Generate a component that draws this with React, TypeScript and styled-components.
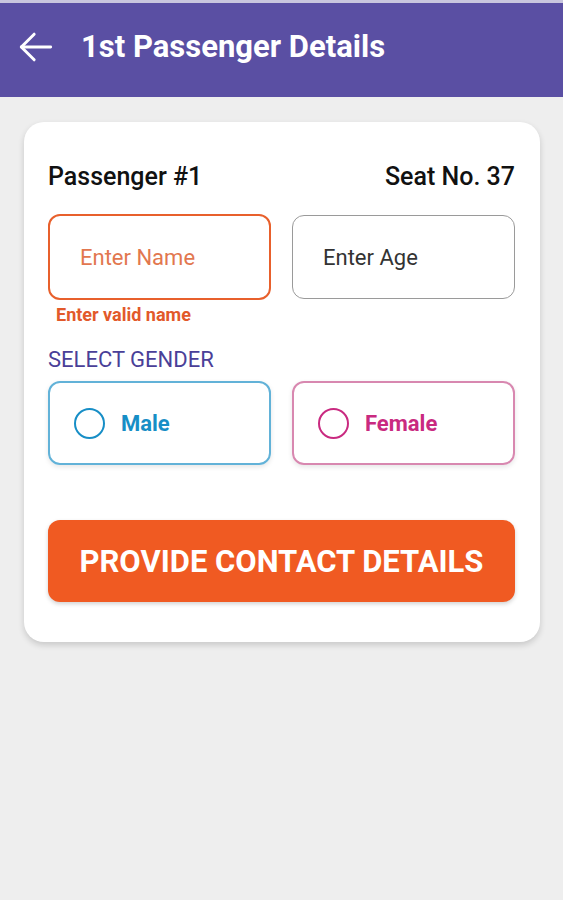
import { createGlobalStyle, styled } from 'styled-components';

const GlobalStyle = createGlobalStyle`
  * {
    box-sizing: border-box;
  }

  body {
    margin: 0;
    background-color: #eeeeee;
    font-family: Roboto, 'Liberation Sans', Arial, sans-serif;
  }
`;

const Page = styled.div`
  min-height: 900px;
  background-color: #eeeeee;
  border-top: 3px solid #c9c6de;
`;

const Header = styled.header`
  display: flex;
  align-items: center;
  gap: 23px;
  height: 94px;
  padding: 0 14px 7px;
  background-color: #5a4fa3;
  color: #ffffff;
`;

const BackButton = styled.button`
  display: flex;
  align-items: center;
  justify-content: center;
  padding: 0;
  border: none;
  background: none;
  color: inherit;
`;

const Title = styled.h1`
  margin: 0;
  font-size: 31px;
  font-weight: 700;
`;

const Card = styled.section`
  margin: 25px 23px 0 24px;
  padding: 40px 25px 40px 24px;
  background-color: #ffffff;
  border-radius: 20px;
  box-shadow: 0 3px 6px rgba(0, 0, 0, 0.16);
`;

const CardHead = styled.div`
  display: flex;
  justify-content: space-between;
  align-items: center;
  height: 28px;
  font-size: 25px;
  font-weight: 500;
  color: #111111;
`;

const Row = styled.div<{ $top: number }>`
  display: grid;
  grid-template-columns: 1fr 1fr;
  gap: 21px;
  margin-top: ${({ $top }) => $top}px;
`;

const Field = styled.div<{ $error?: boolean }>`
  display: flex;
  align-items: center;
  height: ${({ $error }) => ($error ? 86 : 84)}px;
  margin-top: ${({ $error }) => ($error ? 0 : 1)}px;
  padding-left: 30px;
  border: ${({ $error }) => ($error ? '2px solid #e8602c' : '1.5px solid #9a9a9a')};
  border-radius: 12px;
  font-size: 22px;
  color: ${({ $error }) => ($error ? '#e2774f' : '#333333')};
`;

const ErrorText = styled.div`
  margin: 5px 0 0 8px;
  line-height: 20px;
  font-size: 18px;
  font-weight: 700;
  color: #e2592a;
`;

const Label = styled.div`
  margin-top: 23px;
  line-height: 24px;
  font-size: 22px;
  color: #4a3f98;
`;

const GenderOption = styled.label<{ $color: string; $border: string }>`
  display: flex;
  align-items: center;
  gap: 16px;
  height: 84px;
  padding-left: 24px;
  border: 2px solid ${({ $border }) => $border};
  border-radius: 12px;
  box-shadow: 0 2px 5px rgba(0, 0, 0, 0.1);
  font-size: 22px;
  font-weight: 700;
  color: ${({ $color }) => $color};
`;

const Radio = styled.span<{ $color: string }>`
  width: 31px;
  height: 31px;
  border: 2.5px solid ${({ $color }) => $color};
  border-radius: 50%;
`;

const SubmitButton = styled.button`
  display: block;
  width: 100%;
  height: 82px;
  margin-top: 55px;
  border: none;
  border-radius: 12px;
  background-color: #f05a22;
  box-shadow: 0 2px 4px rgba(0, 0, 0, 0.18);
  color: #ffffff;
  font-family: inherit;
  font-size: 31px;
  font-weight: 700;
`;

function ArrowLeft() {
  return (
    <svg width="44" height="44" viewBox="0 0 24 24" fill="none" stroke="currentColor" strokeWidth="1.6" strokeLinecap="round" strokeLinejoin="round">
      <path d="M20 12H4" />
      <path d="M11 5l-7 7 7 7" />
    </svg>
  );
}

const genders = [
  { name: 'Male', color: '#178ec6', border: '#62b2d8' },
  { name: 'Female', color: '#c92a80', border: '#d888b0' },
];

export default function App() {
  return (
    <>
      <GlobalStyle />
      <Page>
        <Header>
          <BackButton aria-label="Back">
            <ArrowLeft />
          </BackButton>
          <Title>1st Passenger Details</Title>
        </Header>
        <Card>
          <CardHead>
            <span>Passenger #1</span>
            <span>Seat No. 37</span>
          </CardHead>
          <Row $top={24}>
            <Field $error>Enter Name</Field>
            <Field>Enter Age</Field>
          </Row>
          <ErrorText>Enter valid name</ErrorText>
          <Label>SELECT GENDER</Label>
          <Row $top={9}>
            {genders.map((g) => (
              <GenderOption key={g.name} $color={g.color} $border={g.border}>
                <Radio $color={g.color} />
                {g.name}
              </GenderOption>
            ))}
          </Row>
          <SubmitButton>PROVIDE CONTACT DETAILS</SubmitButton>
        </Card>
      </Page>
    </>
  );
}
